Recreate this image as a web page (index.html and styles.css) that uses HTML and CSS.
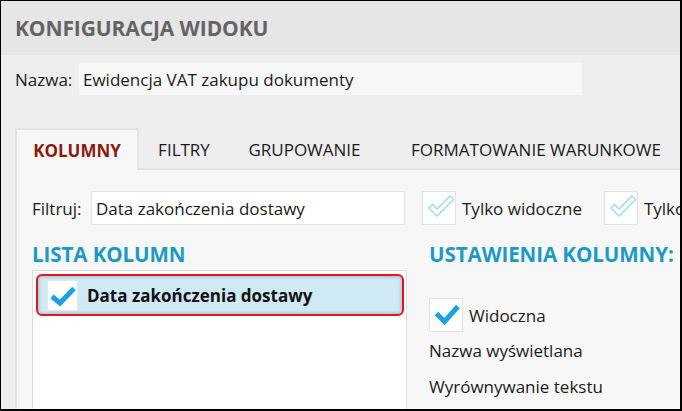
FILE: index.html
```html
<!DOCTYPE html>
<html lang="pl">
<head>
<meta charset="utf-8">
<title>Konfiguracja widoku</title>
<link rel="stylesheet" href="styles.css">
</head>
<body>
<div class="frame">
  <header class="header">
    <h1 class="title">KONFIGURACJA WIDOKU</h1>
  </header>
  <main class="main">
    <div class="name-row">
      <span class="label label--name">Nazwa:</span>
      <div class="name-input">Ewidencja VAT zakupu dokumenty</div>
    </div>
    <nav class="tabs">
      <div class="tab tab--active tab--w1">KOLUMNY</div>
      <div class="tab tab--w2">FILTRY</div>
      <div class="tab tab--w3">GRUPOWANIE</div>
      <div class="tab tab--w4">FORMATOWANIE WARUNKOWE</div>
    </nav>
    <section class="panel">
      <div class="filter-row">
        <span class="label label--filter">Filtruj:</span>
        <div class="filter-input">Data zakończenia dostawy</div>
        <label class="check check--first">
          <span class="box box--light">
            <svg viewBox="0 0 34 34" width="34" height="34"><polygon points="7,17 10.5,13.5 15,18 28,5 31.5,8.5 15,25" fill="none" stroke="#a9dcf3" stroke-width="1.6" stroke-linejoin="miter"/></svg>
          </span>
          <span class="check-text">Tylko widoczne</span>
        </label>
        <label class="check check--second">
          <span class="box box--light">
            <svg viewBox="0 0 34 34" width="34" height="34"><polygon points="7,17 10.5,13.5 15,18 28,5 31.5,8.5 15,25" fill="none" stroke="#a9dcf3" stroke-width="1.6" stroke-linejoin="miter"/></svg>
          </span>
          <span class="check-text">Tylko</span>
        </label>
      </div>
      <div class="columns">
        <div class="col-left">
          <h2 class="section-title">LISTA KOLUMN</h2>
          <div class="list">
            <div class="list-item">
              <span class="box box--item">
                <svg viewBox="0 0 31 31" width="31" height="31"><polyline points="5,16.5 13,23 27,8.5" fill="none" stroke="#1ba1e2" stroke-width="5"/></svg>
              </span>
              <span class="item-text">Data zakończenia dostawy</span>
            </div>
          </div>
        </div>
        <div class="col-right">
          <h2 class="section-title">USTAWIENIA KOLUMNY: <span class="section-accent">D</span></h2>
          <label class="check check--visible">
            <span class="box">
              <svg viewBox="0 0 34 34" width="34" height="34"><polyline points="7.5,15.5 15.5,23.5 29,8.5" fill="none" stroke="#1ba1e2" stroke-width="5"/></svg>
            </span>
            <span class="check-text">Widoczna</span>
          </label>
          <div class="field">Nazwa wyświetlana</div>
          <div class="field">Wyrównywanie tekstu</div>
        </div>
      </div>
    </section>
  </main>
</div>
</body>
</html>
```

FILE: styles.css
```css
* { box-sizing: border-box; }

html, body {
  margin: 0;
  padding: 0;
  background: #ffffff;
}

body {
  font-family: "Open Sans", "Noto Sans", "DejaVu Sans", sans-serif;
  color: #1b1b1b;
  font-size: 17px;
}

.frame {
  width: 682px;
  height: 411px;
  border: 1px solid #000;
  border-right-width: 2px;
  border-bottom-width: 2px;
  display: flex;
  flex-direction: column;
  overflow: hidden;
  background: #eeeeee;
}

.header {
  height: 54px;
  flex: none;
  background: #e6e6e6;
  display: flex;
  align-items: center;
  padding-left: 14px;
}

.title {
  margin: 0;
  font-size: 21px;
  font-weight: 700;
  color: #646464;
  letter-spacing: -0.1px;
}

.main {
  flex: 1;
  display: flex;
  flex-direction: column;
  min-height: 0;
}

.name-row {
  display: flex;
  align-items: center;
  margin-top: 8px;
  padding-left: 14px;
  height: 32px;
}

.label {
  flex: none;
  color: #1b1b1b;
}

.label--name { width: 64px; }
.label--filter { width: 59px; }

.name-input {
  flex: none;
  width: 503px;
  height: 32px;
  background: #f7f7f7;
  display: flex;
  align-items: center;
  padding-left: 4px;
}

.tabs {
  display: flex;
  margin-top: 33px;
  margin-left: 14px;
  height: 40px;
  flex: none;
  position: relative;
  z-index: 1;
}

.tab {
  flex: none;
  height: 40px;
  display: flex;
  align-items: center;
  justify-content: center;
  padding-top: 2px;
  color: #1b1b1b;
  white-space: nowrap;
}

.tab--active {
  background: #f7f7f7;
  border: 2px solid #e3e3e3;
  border-bottom: none;
  height: 42px;
  padding-top: 0;
  font-weight: 700;
  color: #8c1a0e;
}

.tab--w1 { width: 124px; }
.tab--w2 { width: 90px; }
.tab--w3 { width: 151px; }
.tab--w4 { width: 312px; }

.panel {
  flex: 1;
  margin-left: 14px;
  width: 700px;
  background: #f7f7f7;
  border-top: 2px solid #e3e3e3;
  border-left: 2px solid #e3e3e3;
  padding: 21px 0 0 15px;
}

.filter-row {
  display: flex;
  align-items: center;
  height: 34px;
  white-space: nowrap;
}

.filter-input {
  flex: none;
  width: 314px;
  height: 34px;
  background: #ffffff;
  border: 1px solid #e4e4e4;
  display: flex;
  align-items: center;
  padding-left: 4px;
}

.check {
  display: flex;
  align-items: center;
  flex: none;
}

.check--first { margin-left: 17px; }
.check--second { margin-left: 22px; }

.box {
  width: 34px;
  height: 34px;
  background: #ffffff;
  border: 1px solid #e2e2e2;
  display: flex;
  align-items: center;
  justify-content: center;
  flex: none;
}

.box svg { display: block; flex: none; }

.check-text {
  margin-left: 6px;
}

.columns {
  display: flex;
  margin-top: 14px;
}

.col-left {
  width: 375px;
  flex: none;
}

.col-right {
  margin-left: 22px;
  white-space: nowrap;
}

.section-title {
  margin: 0;
  height: 30px;
  font-size: 20.6px;
  font-weight: 700;
  color: #1c9ac5;
  line-height: 30px;
  letter-spacing: -0.1px;
  white-space: nowrap;
}

.section-accent {
  color: #d9261c;
}

.list {
  margin-top: 1px;
  height: 200px;
  background: #ffffff;
  border: 1px solid #dcdcdc;
  padding: 3px 2px 0 3px;
}

.list-item {
  height: 42px;
  border: 2px solid #e8161c;
  border-radius: 6px;
  background: #cfe9f5;
  box-shadow: inset 0 0 3px 1px rgba(90, 140, 165, 0.45);
  display: flex;
  align-items: center;
  padding-left: 9px;
}

.box--item {
  width: 31px;
  height: 31px;
  border: 1px solid #dfe9ee;
}

.item-text {
  margin-left: 9px;
  font-weight: 700;
  color: #111;
}

.check--visible {
  margin-top: 29px;
}

.field {
  height: 36px;
  display: flex;
  align-items: center;
}
```
